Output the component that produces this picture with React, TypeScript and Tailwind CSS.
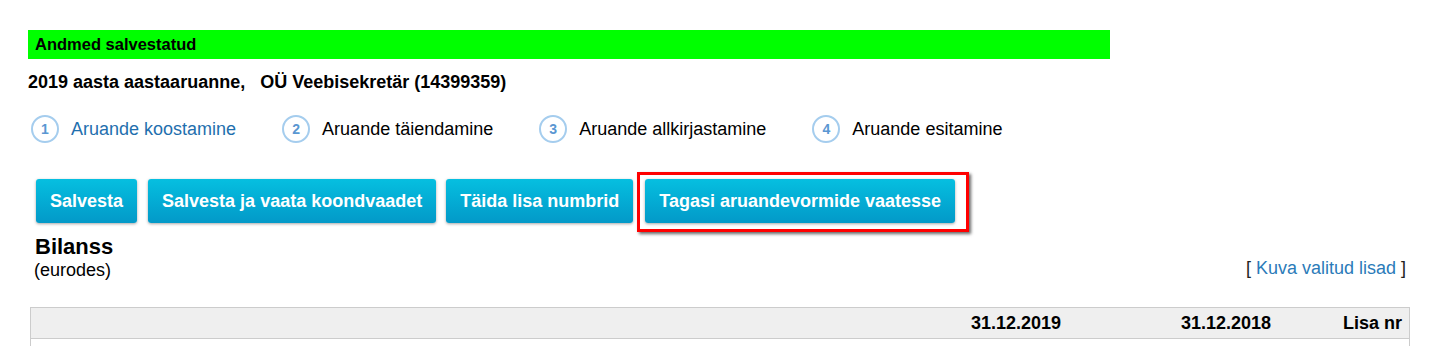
import React from "react";

const steps = [
  { n: "1", label: "Aruande koostamine", active: true },
  { n: "2", label: "Aruande täiendamine", active: false },
  { n: "3", label: "Aruande allkirjastamine", active: false },
  { n: "4", label: "Aruande esitamine", active: false },
];

function Btn({ children }: { children: React.ReactNode }) {
  return (
    <button className="h-[44px] px-[14px] rounded-[3px] bg-gradient-to-b from-[#06bfe0] to-[#0399c8] text-white font-bold text-[18px] shadow-[0_1px_3px_rgba(0,0,0,0.35)] whitespace-nowrap">
      {children}
    </button>
  );
}

export default function App() {
  return (
    <div className="w-[1440px] h-[346px] overflow-hidden bg-white text-black" style={{ fontFamily: '"Liberation Sans", Arial, sans-serif' }}>
      <div className="pl-[28px] pt-[30px]">
        <div className="w-[1082px] h-[29px] bg-[#00ff00] flex items-center px-[7px] text-[16.5px] font-bold">
          Andmed salvestatud
        </div>
        <div className="mt-[12px] h-[22px] flex items-center text-[18px] font-bold whitespace-pre">
          {"2019 aasta aastaaruanne,   OÜ Veebisekretär (14399359)"}
        </div>
        <div className="mt-[21px] pl-[3px] h-[30px] flex items-center gap-[46px]">
          {steps.map((s) => (
            <div key={s.n} className="flex items-center gap-[12px]">
              <div className="w-[28px] h-[28px] rounded-full border-2 border-[#a5cdee] flex items-center justify-center text-[14px] font-bold text-[#5a97d2]">
                {s.n}
              </div>
              <span className={`text-[18px] ${s.active ? "text-[#1f6fae]" : "text-black"}`}>{s.label}</span>
            </div>
          ))}
        </div>
        <div className="mt-[35px] pl-[8px] flex items-center">
          <Btn>Salvesta</Btn>
          <div className="ml-[11px]">
            <Btn>Salvesta ja vaata koondvaadet</Btn>
          </div>
          <div className="ml-[10px]">
            <Btn>Täida lisa numbrid</Btn>
          </div>
          <div className="ml-[12px] relative">
            <Btn>Tagasi aruandevormide vaatesse</Btn>
            <span className="absolute left-[-8px] right-[-14px] top-[-7px] bottom-[-9px] border-[3px] border-[#ff0000] shadow-[2px_2px_3px_rgba(0,0,0,0.6)] pointer-events-none" />
          </div>
        </div>
        <div className="mt-[11px] pl-[7px] text-[22px] font-bold leading-[26px]">Bilanss</div>
        <div className="flex items-center justify-between pl-[6px] pr-[34px] h-[20px]">
          <div className="text-[18px] leading-[20px]">(eurodes)</div>
          <div className="text-[18px] leading-[20px] relative top-[-2px]">
            <span className="text-[#222]">[ </span>
            <span className="text-[#2b7bb9]">Kuva valitud lisad</span>
            <span className="text-[#222]"> ]</span>
          </div>
        </div>
        <div className="mt-[27px] ml-[2px] w-[1380px] border border-[#cccccc]">
          <div className="h-[30px] bg-[#efefef] flex items-center text-[18px] font-bold">
            <div className="flex-1" />
            <div className="w-[210px] text-right pr-[8px]">31.12.2019</div>
            <div className="w-[210px] text-right pr-[8px]">31.12.2018</div>
            <div className="w-[130px] text-right pr-[7px]">Lisa nr</div>
          </div>
          <div className="h-[30px] border-t border-[#cccccc] flex items-center px-[5px] text-[18px]">
            Varad
          </div>
        </div>
      </div>
    </div>
  );
}
